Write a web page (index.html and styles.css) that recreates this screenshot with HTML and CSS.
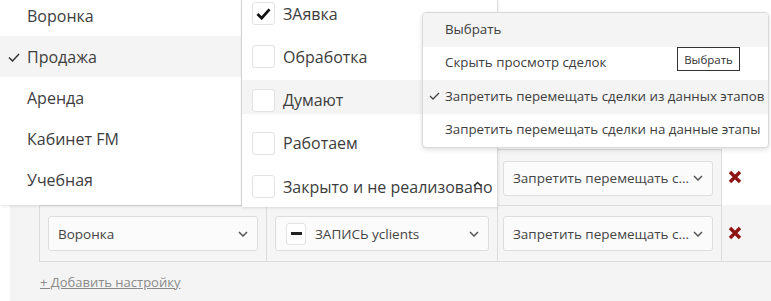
FILE: index.html
```html
<!DOCTYPE html>
<html lang="ru">
<head>
<meta charset="utf-8">
<link rel="stylesheet" href="styles.css">
</head>
<body>
<div class="page">
  <div class="row row-top">
    <div class="cell"></div>
    <div class="cell"></div>
    <div class="cell">
      <div class="select"><span class="select-text">Запретить перемещать с...</span><svg class="chev" viewBox="0 0 10 6"><path d="M1 1 L5 5 L9 1"/></svg></div>
    </div>
    <div class="del"><svg class="x-icon" viewBox="0 0 14 14"><path d="M2 2 L12 12 M12 2 L2 12"/></svg></div>
  </div>
  <div class="panel">
    <div class="row row-bottom">
      <div class="cell">
        <div class="select"><span class="select-text">Воронка</span><svg class="chev" viewBox="0 0 10 6"><path d="M1 1 L5 5 L9 1"/></svg></div>
      </div>
      <div class="cell">
        <div class="select"><span class="minus-box"><span class="minus"></span></span><span class="select-text">ЗАПИСЬ yclients</span><svg class="chev" viewBox="0 0 10 6"><path d="M1 1 L5 5 L9 1"/></svg></div>
      </div>
      <div class="cell">
        <div class="select"><span class="select-text">Запретить перемещать с...</span><svg class="chev" viewBox="0 0 10 6"><path d="M1 1 L5 5 L9 1"/></svg></div>
      </div>
      <div class="del"><svg class="x-icon" viewBox="0 0 14 14"><path d="M2 2 L12 12 M12 2 L2 12"/></svg></div>
    </div>
    <a class="add-link" href="#">+ Добавить настройку</a>
  </div>

  <div class="dd-funnel">
    <div class="funnel-list">
      <div class="f-item">Воронка</div>
      <div class="f-item active"><svg class="f-check" viewBox="0 0 12 9"><path d="M1 4.5 L4.5 8 L11 1"/></svg>Продажа</div>
      <div class="f-item">Аренда</div>
      <div class="f-item">Кабинет FM</div>
      <div class="f-item">Учебная</div>
    </div>
  </div>

  <div class="dd-stages">
    <div class="stage-list">
      <div class="s-item"><span class="cbox"><svg class="cb-check" viewBox="0 0 16 13"><path d="M1.5 6.5 L6 11 L14.5 1.5"/></svg></span>ЗАявка</div>
      <div class="s-item"><span class="cbox"></span>Обработка</div>
      <div class="s-item hover"><span class="cbox"></span>Думают</div>
      <div class="s-item"><span class="cbox"></span>Работаем</div>
      <div class="s-item"><span class="cbox"></span>Закрыто и не реализовано</div>
    </div>
    <svg class="stray-chev" viewBox="0 0 9 6"><path d="M1 5 L4.5 1.5 L8 5"/></svg>
  </div>

  <div class="menu">
    <div class="m-item hl">Выбрать</div>
    <div class="m-item">Скрыть просмотр сделок</div>
    <div class="m-item hl"><svg class="m-check" viewBox="0 0 11 8"><path d="M1 4 L4 7 L10 1"/></svg>Запретить перемещать сделки из данных этапов</div>
    <div class="m-item">Запретить перемещать сделки на данные этапы</div>
  </div>

  <div class="tooltip">Выбрать</div>
</div>
</body>
</html>
```

FILE: styles.css
```css
* { box-sizing: border-box; }
html, body { margin: 0; padding: 0; }
body {
  font-family: "Open Sans", "Noto Sans", sans-serif;
  color: #3d3d3d;
  background: #fff;
}
.page {
  position: relative;
  width: 771px;
  height: 301px;
  overflow: hidden;
  background: #fff;
  padding-top: 149px;
}

/* table rows */
.row {
  display: grid;
  grid-template-columns: 227px 231px 225px 49px;
  height: 56px;
}
.row-top { margin-left: 39px; }
.row-bottom { margin-left: 29px; border-bottom: 1px solid #dcdcdc; height: 57px; }
.cell {
  border-left: 1px solid #dcdcdc;
  border-top: 1px solid #dcdcdc;
  background: #f5f5f5;
  display: flex;
  align-items: center;
  padding: 0 8px 0 8px;
}
.row .cell:nth-child(3) { border-right: 1px solid #dcdcdc; padding: 0 8px 0 5px; }
.row-top .cell:nth-child(3) { padding-top: 1px; }
.del {
  display: flex;
  align-items: center;
  padding-left: 6px;
}
.x-icon {
  width: 14px;
  height: 14px;
  fill: none;
  stroke: #8e1414;
  stroke-width: 3.4;
}
.select {
  width: 100%;
  height: 35px;
  background: #fbfbfb;
  border: 1px solid #dedede;
  border-radius: 3px;
  display: flex;
  align-items: center;
  padding: 0 9px 0 9px;
  font-size: 13.5px;
  color: #444;
}
.select-text { flex: 1; white-space: nowrap; overflow: hidden; }
.chev {
  width: 10px;
  height: 6px;
  fill: none;
  stroke: #555;
  stroke-width: 1.5;
}
.minus-box {
  width: 20px;
  height: 22px;
  background: #fff;
  border: 1px solid #e4e4e4;
  border-radius: 3px;
  display: flex;
  align-items: center;
  justify-content: center;
  margin: 0 9px 0 1px;
}
.minus { width: 11px; height: 3px; background: #222; }

.panel {
  margin-left: 10px;
  height: 96px;
  background: #f4f4f4;
}
.add-link {
  display: block;
  margin: 11px 0 0 30px;
  font-size: 13px;
  color: #8a8a8a;
  text-decoration: underline;
}

/* funnel dropdown */
.dd-funnel {
  position: absolute;
  left: 0;
  top: 0;
  width: 242px;
  height: 205px;
  background: #fff;
  border-right: 1px solid #dcdcdc;
  box-shadow: 0 1px 3px rgba(0,0,0,0.12);
  overflow: hidden;
}
.funnel-list { margin-top: -5px; }
.f-item {
  position: relative;
  height: 41px;
  display: flex;
  align-items: center;
  padding-left: 27px;
  font-size: 16px;
  color: #3d3d3d;
}
.f-item.active { background: #f4f4f4; }
.f-check {
  position: absolute;
  left: 8px;
  top: 17px;
  width: 12px;
  height: 9px;
  fill: none;
  stroke: #333;
  stroke-width: 1.5;
}

/* stages dropdown */
.dd-stages {
  position: absolute;
  left: 242px;
  top: 0;
  width: 256px;
  height: 207px;
  background: #fff;
  border-right: 1px solid #dcdcdc;
  box-shadow: 0 1px 3px rgba(0,0,0,0.12);
  overflow: hidden;
}
.stage-list { margin-top: -8px; }
.s-item {
  height: 43.25px;
  display: flex;
  align-items: center;
  padding-left: 10px;
  font-size: 16px;
  color: #3d3d3d;
  white-space: nowrap;
}
.s-item.hover {
  background: linear-gradient(to bottom, transparent 0 1px, #f4f4f4 1px 35px, transparent 35px);
}
.cbox {
  width: 23px;
  height: 23px;
  border: 1px solid #e2e2e2;
  border-radius: 3px;
  background: #fff;
  margin-right: 8px;
  display: flex;
  align-items: center;
  justify-content: center;
  flex: none;
}
.cb-check {
  width: 15px;
  height: 12px;
  fill: none;
  stroke: #111;
  stroke-width: 3;
}
.stray-chev {
  position: absolute;
  left: 231px;
  top: 181px;
  width: 9px;
  height: 6px;
  fill: none;
  stroke: #222;
  stroke-width: 1.4;
}

/* action menu */
.menu {
  position: absolute;
  left: 422px;
  top: 12px;
  width: 347px;
  height: 136px;
  background: #fff;
  border: 1px solid #d8d8d8;
  border-radius: 4px;
  box-shadow: 0 2px 5px rgba(0,0,0,0.12);
  overflow: hidden;
}
.m-item {
  position: relative;
  height: 33.5px;
  display: flex;
  align-items: center;
  padding-left: 22px;
  padding-bottom: 2px;
  font-size: 13.3px;
  color: #3d3d3d;
  white-space: nowrap;
}
.m-item.hl { background: #f4f4f4; }
.m-check {
  position: absolute;
  left: 6px;
  top: 12px;
  width: 11px;
  height: 8px;
  fill: none;
  stroke: #444;
  stroke-width: 1.3;
}
.tooltip {
  position: absolute;
  left: 677px;
  top: 47px;
  width: 63px;
  height: 24px;
  background: #fff;
  border: 1px solid #333;
  font-size: 11.5px;
  color: #333;
  display: flex;
  align-items: center;
  justify-content: center;
}
```
